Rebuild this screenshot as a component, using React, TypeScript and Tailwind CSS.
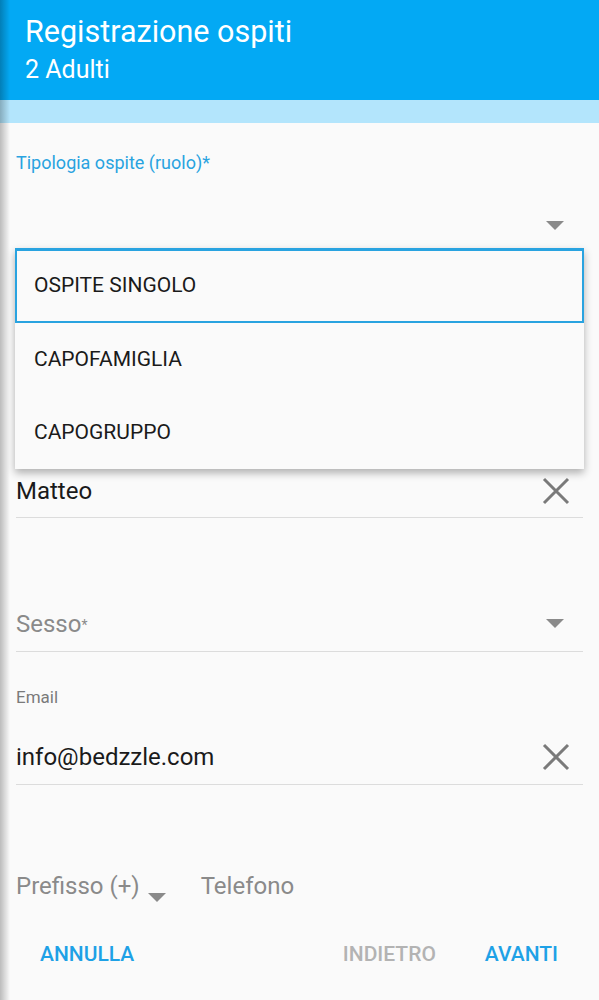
import React from 'react'

const font = { fontFamily: 'Roboto, "Noto Sans", Arial, sans-serif' }

function Caret({ className = '' }: { className?: string }) {
    return (
        <svg width="18" height="9" viewBox="0 0 18 9" className={className}>
            <path d="M0 0 L18 0 L9 9 Z" fill="#8a8a8a" />
        </svg>
    )
}

function ClearIcon() {
    return (
        <svg width="28" height="28" viewBox="0 0 28 28">
            <path d="M2 2 L26 26 M26 2 L2 26" stroke="#7a7a7a" strokeWidth="3" />
        </svg>
    )
}

export default function App() {
    const options = ['OSPITE SINGOLO', 'CAPOFAMIGLIA', 'CAPOGRUPPO']

    return (
        <div className="relative w-[599px] h-[1000px] overflow-hidden bg-[#fafafa]" style={font}>
            {/* Header */}
            <div className="h-[100px] bg-[#03a9f4] px-[25px] pt-[13px] text-white">
                <div className="text-[30.5px] leading-[38px]">Registrazione ospiti</div>
                <div className="text-[25px] leading-[32px] mt-[3px]">2 Adulti</div>
            </div>
            <div className="h-[23px] bg-[#b3e5fc]" />

            {/* Form */}
            <div className="relative px-[16px]">
                {/* Tipologia */}
                <div className="h-[127px] flex flex-col">
                    <div className="mt-[30px] text-[18px] leading-[20px] text-[#29a3e0]">Tipologia ospite (ruolo)*</div>
                    <div className="mt-[48px] flex justify-end pr-[19px]">
                        <Caret />
                    </div>
                </div>

                {/* Nome */}
                <div className="h-[268px] flex flex-col justify-end">
                    <div className="h-[54px] flex items-center justify-between border-b border-[#dcdcdc] pr-[13px]">
                        <span className="text-[24px] text-[#1a1a1a]">Matteo</span>
                        <ClearIcon />
                    </div>
                </div>

                {/* Sesso */}
                <div className="h-[134px] flex flex-col justify-end">
                    <div className="h-[56px] flex items-center justify-between border-b border-[#dcdcdc] pr-[19px]">
                        <span className="text-[24px] text-[#8a8a8a]">
                            Sesso<span className="text-[14px] align-middle">*</span>
                        </span>
                        <Caret />
                    </div>
                </div>

                {/* Email */}
                <div className="pt-[35px]">
                    <div className="text-[17px] leading-[20px] text-[#7a7a7a]">Email</div>
                    <div className="h-[55px] mt-[23px] flex items-center justify-between border-b border-[#dcdcdc] pr-[13px]">
                        <span className="text-[24px] text-[#1a1a1a]">info@bedzzle.com</span>
                        <ClearIcon />
                    </div>
                </div>

                {/* Telefono */}
                <div className="mt-[85px] h-[32px] flex items-center text-[24px] text-[#8a8a8a]">
                    <span>Prefisso (+)</span>
                    <Caret className="ml-[8px] mt-[22px]" />
                    <span className="ml-[35px]">Telefono</span>
                </div>

                {/* Menu overlay */}
                <div className="absolute left-[15px] top-[125px] w-[569px] bg-[#fafafa] shadow-[0_4px_8px_rgba(0,0,0,0.3)]">
                    {options.map((o, i) => (
                        <div
                            key={o}
                            className={
                                i === 0
                                    ? 'h-[75px] flex items-center pl-[17px] border-2 border-t-[3px] border-[#29a3e0] text-[21px] text-[#1a1a1a]'
                                    : 'h-[73px] flex items-center pl-[19px] text-[21px] text-[#1a1a1a]'
                            }
                        >
                            {o}
                        </div>
                    ))}
                </div>
            </div>

            {/* Actions */}
            <div className="mt-[35px] h-[36px] flex items-center text-[21px] font-medium">
                <span className="ml-[40px] text-[#1ea1e6]">ANNULLA</span>
                <span className="ml-auto text-[#b3b3b3]">INDIETRO</span>
                <span className="ml-[49px] mr-[41px] text-[#1ea1e6]">AVANTI</span>
            </div>

            {/* Left edge shadow */}
            <div className="absolute left-0 top-0 h-full w-[10px] bg-gradient-to-r from-black/25 to-transparent" />
        </div>
    )
}
